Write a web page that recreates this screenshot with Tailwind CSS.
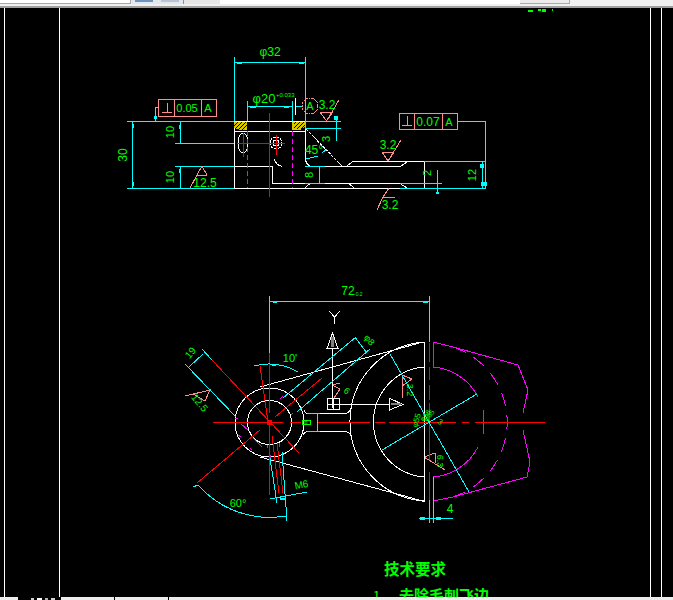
<!DOCTYPE html>
<html lang="en">

<head>
  <meta charset="UTF-8">
  <meta name="viewport" content="width=device-width, initial-scale=1.0">
  <title>CAD drawing</title>
  <script src="https://cdn.jsdelivr.net/npm/@tailwindcss/browser@4"></script>
</head>

<body class="bg-black">
  <div class="flex flex-col h-[600px] w-[673px] overflow-hidden font-['Liberation_Sans',sans-serif]">
    <!-- top toolbar, only its bottom edge is visible -->
    <div class="h-2 shrink-0 bg-[#f0f0f0] border-b-2 border-[#a0a0a0] flex">
      <div class="w-[131px] h-1 bg-white border-r border-b border-[#a8a8a8]"></div>
      <div class="w-[52px] h-1 bg-[#e4e8ee] flex gap-2 px-1">
        <div class="w-5 h-[2px] bg-[#6d94bd]"></div>
        <div class="w-5 h-[2px] bg-[#b8c4d0]"></div>
      </div>
      <div class="w-[37px] h-1 bg-[#e6e6e6] border-l border-[#909090]"></div>
      <div class="w-[300px] h-1 bg-white"></div>
      <div class="w-[50px] h-1 bg-[#ececec] border-r border-b border-[#a8a8a8]"></div>
    </div>

    <!-- model space -->
    <div class="flex-1 min-h-0 bg-black">
      <svg viewBox="0 8 673 589" width="673" height="589" class="block" fill="none" font-family="Liberation Sans, sans-serif">
        <g shape-rendering="crispEdges" stroke-width="1">
          <!-- frame -->
          <path stroke="#ffffff" d="M4.5 8V597M59.5 8V597M650.5 8V597M661.5 8V597" />

          <!-- front view outline -->
          <g stroke="#ffffff">
            <path d="M234.5 121.5H305.5M234.5 131.5H305.5M234.5 121V188.5H407M305.5 128V159Q306 164 310 166H401L407 162V161.5H424.5V188M400 183.5H272V166.5H234.5" />
            <path d="M274 159Q276 165 282 166.5M347 166L353 161.5H407M305 188L310 183.5M349 183.5L354 188M400 183.5L407 188M295.5 98V115" />
            <path stroke-dasharray="3 1" d="M306 129L342 166" />
            <ellipse cx="243" cy="143" rx="5" ry="10" />
            <circle cx="276" cy="143" r="6" stroke-dasharray="3 1" />
            <circle cx="276" cy="143" r="3" />
          </g>
          <path fill="#d9c800" d="M234 122H247V130H239L234 128ZM292 122H305V127L300 130H292Z" />
          <path stroke="#000000" d="M234 126L238 122M235 129L242 122M238 130L246 122M242 130L247 125M294 124L296 122M294 128L300 122M297 129L304 122M301 129L305 125" />
          <path stroke="#ff0000" d="M237 143.5H285M243.5 133V157M276.5 135V155M269.5 113V197" />
          <path stroke="#ff00ff" stroke-dasharray="5 3" d="M247.5 131V188M292.5 131V188" />

          <!-- front view dimensions -->
          <g stroke="#00ffff">
            <path d="M234.5 57V121M305.5 57V128M234 62.5H305M247.5 101V121M292.5 101V121M247 106.5H292M296 106.5H303" />
            <path d="M127 121.5H234M305 121.5H341M305 128.5H341M336.5 116V141M132.5 121V188M127 188.5H234" />
            <path d="M180.5 121V143M175 143.5H234M175 166.5H234M180.5 166V188M155.5 107V121M155 107.5H158" />
            <path d="M306 159L318 156M322 153L327 149M319.5 166V183M305 166.5H325M305 183.5H325" />
            <path d="M400 183.5H442M400 188.5H486M424 161.5H486M437.5 170V194M482.5 161V188M485.5 121V188M457 121.5H485" />
          </g>
          <path fill="#00ffff" d="M154 116H157V119H154ZM132 124H134V128H132ZM132 182H134V186H132ZM179 125H181V129H179ZM179 169H181V173H179ZM237 62H242V64H237ZM299 62H304V64H299ZM250 106H256V108H250ZM284 106H289V108H284ZM334 116H338V120H334ZM480 164H484V168H480ZM481 182H484V186H481ZM484 182H487V186H484ZM436 192H439V194H436Z" />

          <!-- tolerance boxes and surface marks -->
          <g stroke="#ff8c8c">
            <path d="M158.5 99.5H216.5V116.5H158.5ZM174.5 99V116M201.5 99V116M162 112.5H172M167.5 103V112" />
            <path d="M399.5 113.5H457.5V129.5H399.5ZM414.5 113V129M442.5 113V129M402 125.5H412M407.5 116V125" />
            <circle cx="310" cy="106" r="8" stroke-dasharray="2 1" />
            <path d="M320 112.5H333M320 112L326.5 121L333 112M326.5 121L339 100" />
            <path d="M382 152.5H394M382 152L388 161L394 152M388 161L401 140" />
            <path d="M383 197.5H395M389 188L383 197L395 197M383 197L377 210" />
            <path d="M196 175.5H207M197 175L202 166L207 175M197 175L190 188" />
            <!-- plan view surface marks -->
            <path d="M185 396L210 390L205 401L193 394M332 385L340 383M332 385L340 389L334 398" />
            <path d="M402 375L412 379L402 386M402.5 375V398M424 457L435 453M435 453V463M424 457L445 470" />
          </g>

          <!-- plan view -->
          <g stroke="#ffffff">
            <circle cx="269.5" cy="422.5" r="34.5" stroke="#ffffff" />
            <circle cx="269.5" cy="422.5" r="22" />
            <path d="M260 387L423 342H424.5V501H422L412 498L260 457" />
            <path d="M304 410Q305 413.5 308 413.5H345Q350 413 352 406M303 435Q305 431.5 308 431.5H345Q350 432 352 438" />
            <path d="M424 342A79.7 79.7 0 0 0 424 501M424 367A55.2 55.2 0 0 0 424 477" />
            <path d="M332.5 348V408M327 348.5H338L332.5 333ZM329 311L334.5 317L340 311M334.5 317V324" />
            <path d="M327.5 398.5H339.5V409.5H327.5ZM333.5 398V409M327 404.5H389M389.5 398V410L403 404.5L389 398" />
          </g>
          <path fill="#808080" d="M331 337H334V347H331ZM391 403H401V405H391Z" />
          <g stroke="#ff00ff">
            <path d="M433.5 342V367M433.5 477V501M433 342L453 347L518 365L528 390L523 413M523 430L530 462L527 477L453 497L433 501" />
            <path d="M433 367A55 55 0 0 1 478 397M483.5 410V434M478 447A55 55 0 0 1 433 477" />
            <path stroke-dasharray="14 9" d="M453 347A79 79 0 0 1 453 497" />
            <path d="M235 418L238 419M238 435L241 437M241 424L248 430M250 448L252 450M253 438L262 447M267 445V448M279 443V447M270 455V458M280 399L283 396M291 415L293 413" />
          </g>
          <g stroke="#ff0000">
            <path d="M213 422.5H283M290 422.5H301M317 422.5H370M375 422.5H385M389 422.5H456M462 422.5H469M475 422.5H545" />
            <path d="M269.5 353V413M269.5 425V495M212 360L299 453M322 378L275 417M260 430L197 483M260 366L268 422M272 436L279 493M277 443L283 493" />
            <path d="M429.5 343V362M429.5 367V380M429.5 385V400M429.5 403V460M429.5 472V513" />
          </g>
          <rect x="267" y="420" width="5" height="5" fill="#ff0000" />
          <g stroke="#00ffff">
            <path d="M269.5 296V353M429.5 296V342M269 301.5H429M429.5 500V523M433.5 477V523M419 518.5H453" />
            <path d="M283 398L356 337M297 412L370 349M355 337L366 352M185 364L236 417M202 349L212 360M189 367L203 354" />
            <path d="M317.5 413V431M307 413.5H320M307 431.5H320" />
            <path d="M382 450L477 394M390 354L469 492" />
            <path d="M270 458L277 503M282 452L287 521M270 499L307 492M254 366A58 58 0 0 1 298 372" />
            <path d="M198 485A95 95 0 0 0 285 516M193 487L198 485M285 516H287" />
          </g>
          <path fill="#00ffff" d="M420 517H425V520H420ZM436 517H441V520H436ZM273 301H277V303H273ZM423 301H428V303H423ZM272 364H276V366H272ZM280 498H286V500H280Z" />
          <rect x="302.5" y="420.5" width="8" height="4" stroke="#00ff00" shape-rendering="crispEdges" />
        </g>

        <!-- front view text -->
        <g fill="#00ff00" font-size="11" text-anchor="middle">
          <text x="270" y="56" font-size="12">φ32</text>
          <text x="264" y="103" font-size="13">φ20</text>
          <text x="276" y="97" font-size="6" text-anchor="start">+0.033</text>
          <text x="310" y="110" font-size="11">A</text>
          <text x="327" y="109" font-size="12">3.2</text>
          <text x="187" y="112" font-size="11">0.05</text>
          <text x="208" y="112" font-size="11">A</text>
          <text x="428" y="126" font-size="12">0.07</text>
          <text x="449" y="126" font-size="11">A</text>
          <text x="388" y="149" font-size="12">3.2</text>
          <text x="390" y="209" font-size="12">3.2</text>
          <text x="205" y="187" font-size="12">12.5</text>
          <text x="314" y="154" font-size="12">45°</text>
          <text transform="translate(127 155) rotate(-90)" font-size="12">30</text>
          <text transform="translate(174 132) rotate(-90)">10</text>
          <text transform="translate(174 177) rotate(-90)">10</text>
          <text transform="translate(330 139) rotate(-90)">3</text>
          <text transform="translate(313 175) rotate(-90)">8</text>
          <text transform="translate(431 173) rotate(-90)">2</text>
          <text transform="translate(476 175) rotate(-90)">12</text>

          <!-- plan view text -->
          <text x="348" y="295" font-size="12">72</text>
          <text x="354" y="296" font-size="5" text-anchor="start">-0.2</text>
          <text x="290" y="362">10'</text>
          <text x="238" y="507">60°</text>
          <text x="450" y="513" font-size="12">4</text>
          <text x="306" y="424" font-size="6">8</text>
          <text transform="translate(302 488) rotate(-10)" font-size="10">M6</text>
          <text transform="translate(193 355) rotate(-50)" font-size="10">19</text>
          <text transform="translate(197 405) rotate(50)" font-size="10">12.5</text>
          <text transform="translate(367 342) rotate(50)" font-size="9">φ8</text>
          <text transform="translate(345 393) rotate(40)" font-size="9">6</text>
          <text transform="translate(407 390) rotate(90)" font-size="9">3.2</text>
          <text transform="translate(437 461) rotate(90)" font-size="9">6.3</text>
          <text transform="translate(419 421) rotate(-75)" font-size="8">φ55</text>
          <text transform="translate(427 417) rotate(-50)" font-size="7">φ68</text>
          <text transform="translate(431 417) rotate(-50)" font-size="7">φ65</text>
          <text transform="translate(439 424) rotate(30)" font-size="8">3</text>
        </g>

        <!-- technical notes, cut off by the status bar -->
        <g fill="#00ff00" font-family="Noto Sans CJK SC, sans-serif" font-weight="700">
          <text x="384" y="575" font-size="15.5">技术要求</text>
          <text x="373" y="601" font-size="13" font-weight="400">1</text>
          <text x="399" y="601" font-size="15">去除毛刺飞边</text>
        </g>
        <!-- next line of text above the view, mostly scrolled out -->
        <path fill="#00ff00" d="M528 10H533V12H528ZM538 9H541V11H538ZM542 9H546V12H542ZM552 9H553V11H552Z" />
      </svg>
    </div>

    <!-- layout tabs -->
    <div class="h-[3px] shrink-0 bg-black flex">
      <div class="w-[18px] bg-[#ececec]"></div>
      <div class="w-[5px]"></div>
      <div class="w-[36px] flex gap-[3px] pl-2 pt-px">
        <div class="w-[3px] bg-[#d0d0d0]"></div>
        <div class="w-[5px] bg-white"></div>
        <div class="w-[3px] bg-[#b0b0b0]"></div>
        <div class="w-[4px] bg-[#d0d0d0]"></div>
      </div>
      <div class="w-[2px]"></div>
      <div class="w-[53px] bg-[#ececec]"></div>
      <div class="w-px"></div>
      <div class="w-[53px] bg-[#ececec]"></div>
      <div class="w-px"></div>
      <div class="flex-1 bg-[#ececec]"></div>
    </div>
  </div>
</body>

</html>
